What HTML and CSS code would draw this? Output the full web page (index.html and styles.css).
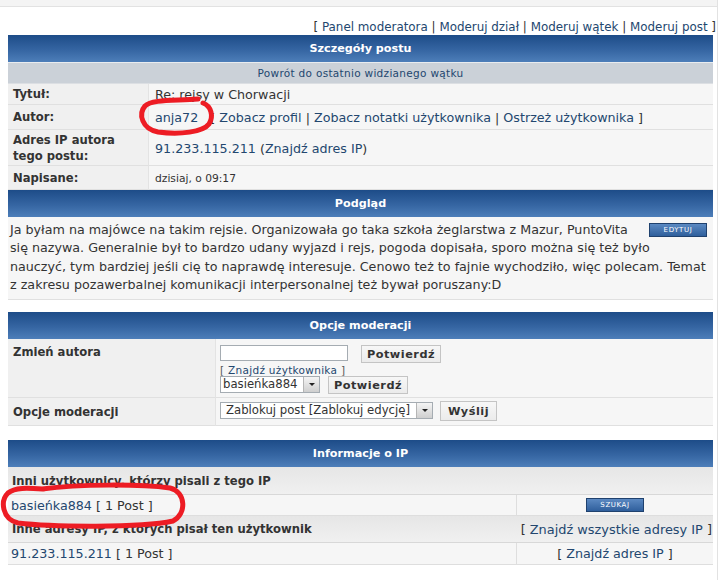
FILE: index.html
```html
<!DOCTYPE html>
<html lang="pl">
  <head>
    <meta charset="UTF-8" />
    <title>Szczegóły postu</title>
    <link rel="stylesheet" href="styles.css">
  </head>
  <body>
    <div class="page">
      <div class="topstrip"></div>

      <div class="modlinks">[ <a href="#">Panel moderatora</a> | <a href="#">Moderuj dział</a> | <a href="#">Moderuj wątek</a> | <a href="#">Moderuj post</a> ]</div>

      <section class="box">
        <div class="cat">Szczegóły postu</div>
        <div class="subcat"><a href="#">Powrót do ostatnio widzianego wątku</a></div>
        <div class="details">
          <div class="lbl">Tytuł:</div>
          <div class="val"><span>Re: rejsy w Chorwacji</span></div>
          <div class="lbl">Autor:</div>
          <div class="val"><span><a href="#" class="user">anja72</a>&nbsp;&nbsp; [ <a href="#">Zobacz profil</a> | <a href="#">Zobacz notatki użytkownika</a> | <a href="#">Ostrzeż użytkownika</a> ]</span></div>
          <div class="lbl">Adres IP autora<br>tego postu:</div>
          <div class="val"><span><a href="#">91.233.115.211</a> (<a href="#">Znajdź adres IP</a>)</span></div>
          <div class="lbl">Napisane:</div>
          <div class="val small"><span>dzisiaj, o 09:17</span></div>
        </div>
        <div class="cat">Podgląd</div>
        <div class="preview">
          <a href="#" class="btn-blue edit">EDYTUJ</a>
          <p>Ja byłam na majówce na takim rejsie. Organizowała go taka szkoła żeglarstwa z Mazur, PuntoVita się nazywa. Generalnie był to bardzo udany wyjazd i rejs, pogoda dopisała, sporo można się też było nauczyć, tym bardziej jeśli cię to naprawdę interesuje. Cenowo też to fajnie wychodziło, więc polecam. Temat z zakresu pozawerbalnej komunikacji interpersonalnej też bywał poruszany:D</p>
        </div>
      </section>

      <section class="box gap">
        <div class="cat">Opcje moderacji</div>
        <div class="modgrid">
          <div class="lbl top">Zmień autora</div>
          <div class="val form">
            <div class="line">
              <input type="text" class="text">
              <button class="btn w80">Potwierdź</button>
            </div>
            <div class="finduser">[ <a href="#">Znajdź użytkownika</a> ]</div>
            <div class="line">
              <span class="select w100"><span class="opt">basieńka884</span><span class="arrow"></span></span>
              <button class="btn w80">Potwierdź</button>
            </div>
          </div>
          <div class="lbl">Opcje moderacji</div>
          <div class="val form mid">
            <div class="line">
              <span class="select w213"><span class="opt">Zablokuj post [Zablokuj edycję]</span><span class="arrow"></span></span>
              <button class="btn w56">Wyślij</button>
            </div>
          </div>
        </div>
      </section>

      <section class="box gap2">
        <div class="cat">Informacje o IP</div>
        <div class="ipgrid">
          <div class="rowhead span">Inni użytkownicy, którzy pisali z tego IP</div>
          <div class="ipcell"><span><a href="#">basieńka884</a> [ 1 Post ]</span></div>
          <div class="ipcell side"><a href="#" class="btn-blue">SZUKAJ</a></div>
          <div class="rowhead tall">Inne adresy IP, z których pisał ten użytkownik</div>
          <div class="rowhead tall plain"><span>[ <a href="#">Znajdź wszystkie adresy IP</a> ]</span></div>
          <div class="ipcell"><span><a href="#">91.233.115.211</a> [ 1 Post ]</span></div>
          <div class="ipcell side"><span>[ <a href="#">Znajdź adres IP</a> ]</span></div>
        </div>
      </section>

      <svg class="marks" width="719" height="580" viewBox="0 0 719 580">
        <path d="M198 99 C176 101 152 99 145 106 C138 114 142 129 158 132 C180 135 203 132 209 124 C214 116 211 106 203 103" />
        <path d="M42 489 C80 484 140 484 170 488 C186 492 187 514 173 521 C140 528 52 527 18 523 C2 519 0 501 8 493 C15 487 28 488 44 489" />
      </svg>
    </div>
  </body>
</html>
```

FILE: styles.css
```css
* {
  box-sizing: border-box;
}

body {
  margin: 0;
  background: #fff;
  color: #333;
  font-family: "DejaVu Sans", Verdana, sans-serif;
  font-size: 12.7px;
}

a {
  color: #23476f;
  text-decoration: none;
}

.page {
  position: relative;
  width: 718px;
  height: 580px;
  border-right: 1px solid #e2e2e2;
  overflow: hidden;
}

.topstrip {
  height: 7px;
  background: #f4f4f4;
  border-bottom: 1px solid #e2e2e2;
}

.modlinks {
  height: 28px;
  padding: 12px 1px 0 0;
  line-height: 16px;
  font-size: 11.9px;
  text-align: right;
}

/* cajas */
.box {
  margin-left: 8px;
  width: 705px;
}
.box.gap { margin-top: 12px; }
.box.gap2 { margin-top: 14px; }

.cat {
  height: 27px;
  line-height: 27px;
  text-align: center;
  color: #fff;
  font-weight: bold;
  font-size: 11.2px;
  background: linear-gradient(to bottom, #1d4c88 0%, #3565a2 55%, #4d7eb9 100%);
}

.subcat {
  height: 22px;
  line-height: 21px;
  text-align: center;
  font-size: 10.5px;
  letter-spacing: 0.3px;
  background: #cbd1d8;
  border-top: 1px solid #e9ecef;
  border-bottom: 1px solid #dcdfe3;
}

.details {
  display: grid;
  grid-template-columns: 141px 1fr;
  grid-template-rows: 21px 25px 36px 24px;
}

.lbl {
  display: flex;
  align-items: center;
  padding: 0 5px;
  background: #f0f0f0;
  border-right: 1px solid #e3e3e3;
  border-bottom: 1px solid #e0e0e0;
  font-weight: bold;
  font-size: 11.6px;
  line-height: 16px;
}
.lbl.top {
  align-items: flex-start;
  padding-top: 5px;
}

.val {
  display: flex;
  align-items: center;
  padding: 1px 6px 0;
  background: #f6f6f6;
  border-bottom: 1px solid #e0e0e0;
  white-space: nowrap;
}
.val.small { font-size: 10.7px; }

.preview {
  padding: 4px 6px 5px 2px;
  line-height: 18.3px;
  background: #f6f6f6;
  border-bottom: 1px solid #e0e0e0;
}
.preview p {
  margin: 0;
}

.btn-blue {
  display: inline-block;
  width: 58px;
  height: 14px;
  line-height: 12px;
  text-align: center;
  color: #fff;
  font-size: 7px;
  letter-spacing: 0.6px;
  background: linear-gradient(to bottom, #5b89c2, #2f5f9c);
  border: 1px solid #1f416e;
}
.edit {
  float: right;
  margin: 2px 0 0 12px;
}

/* opciones de moderacion */
.modgrid {
  display: grid;
  grid-template-columns: 208px 1fr;
  grid-template-rows: 59px 28px;
}

.val.form {
  display: block;
  padding: 6px 4px 0;
}
.val.form.mid { padding-top: 4px; }

.line {
  display: flex;
  align-items: flex-start;
}

.text {
  width: 128px;
  height: 16px;
  margin: 0 13px 0 0;
  border: 1px solid #a5acb2;
  background: #fff;
}

.btn {
  height: 18px;
  padding: 0;
  background: linear-gradient(to bottom, #f7f7f7, #ebebeb);
  border: 1px solid #c4c4c4;
  color: #333;
  font-family: "DejaVu Sans", Verdana, sans-serif;
  font-weight: bold;
  font-size: 11.3px;
  letter-spacing: 0.5px;
}
.w80 { width: 80px; }
.w56 { width: 57px; height: 20px; margin-top: -1px; }

.finduser {
  height: 12px;
  margin-top: 1px;
  line-height: 12px;
  font-size: 10.5px;
  letter-spacing: 0.3px;
  color: #555;
}

.select {
  display: inline-flex;
  justify-content: space-between;
  height: 17px;
  margin-right: 8px;
  border: 1px solid #a5acb2;
  background: #fff;
  font-size: 11.7px;
  line-height: 15px;
}
.w100 { width: 100px; }
.w213 { width: 213px; margin-right: 7px; }
.opt { padding-left: 2px; }
.w213 .opt { padding-left: 5px; }
.arrow {
  position: relative;
  width: 16px;
  height: 15px;
  background: linear-gradient(to bottom, #f4f4f4, #cfcfcf);
  border-left: 1px solid #b5b5b5;
}
.arrow::after {
  content: "";
  position: absolute;
  left: 5px;
  top: 6px;
  border-left: 3px solid transparent;
  border-right: 3px solid transparent;
  border-top: 3px solid #222;
}

/* informacion de IP */
.ipgrid {
  display: grid;
  grid-template-columns: 508px 1fr;
  grid-template-rows: 28px 21px 27px 22px;
}

.rowhead {
  display: flex;
  align-items: center;
  padding: 0 4px;
  font-weight: bold;
  font-size: 11.6px;
  background: linear-gradient(to bottom, #e6e6e6, #f0f0f0);
  border-bottom: 1px solid #d8d8d8;
}
.rowhead.span { grid-column: 1 / 3; }
.rowhead.plain {
  font-weight: normal;
  font-size: 12.9px;
  justify-content: flex-end;
  padding: 0 1px 0 0;
  white-space: nowrap;
}

.ipcell {
  display: flex;
  align-items: center;
  padding: 0 3px;
  background: #f6f6f6;
  border-bottom: 1px solid #dedede;
  white-space: nowrap;
}
.side {
  justify-content: center;
  border-left: 1px solid #dedede;
}

.marks {
  position: absolute;
  left: 0;
  top: 0;
  pointer-events: none;
}
.marks path {
  fill: none;
  stroke: #ed1c24;
  stroke-width: 5;
  stroke-linecap: round;
  stroke-linejoin: round;
}
```
